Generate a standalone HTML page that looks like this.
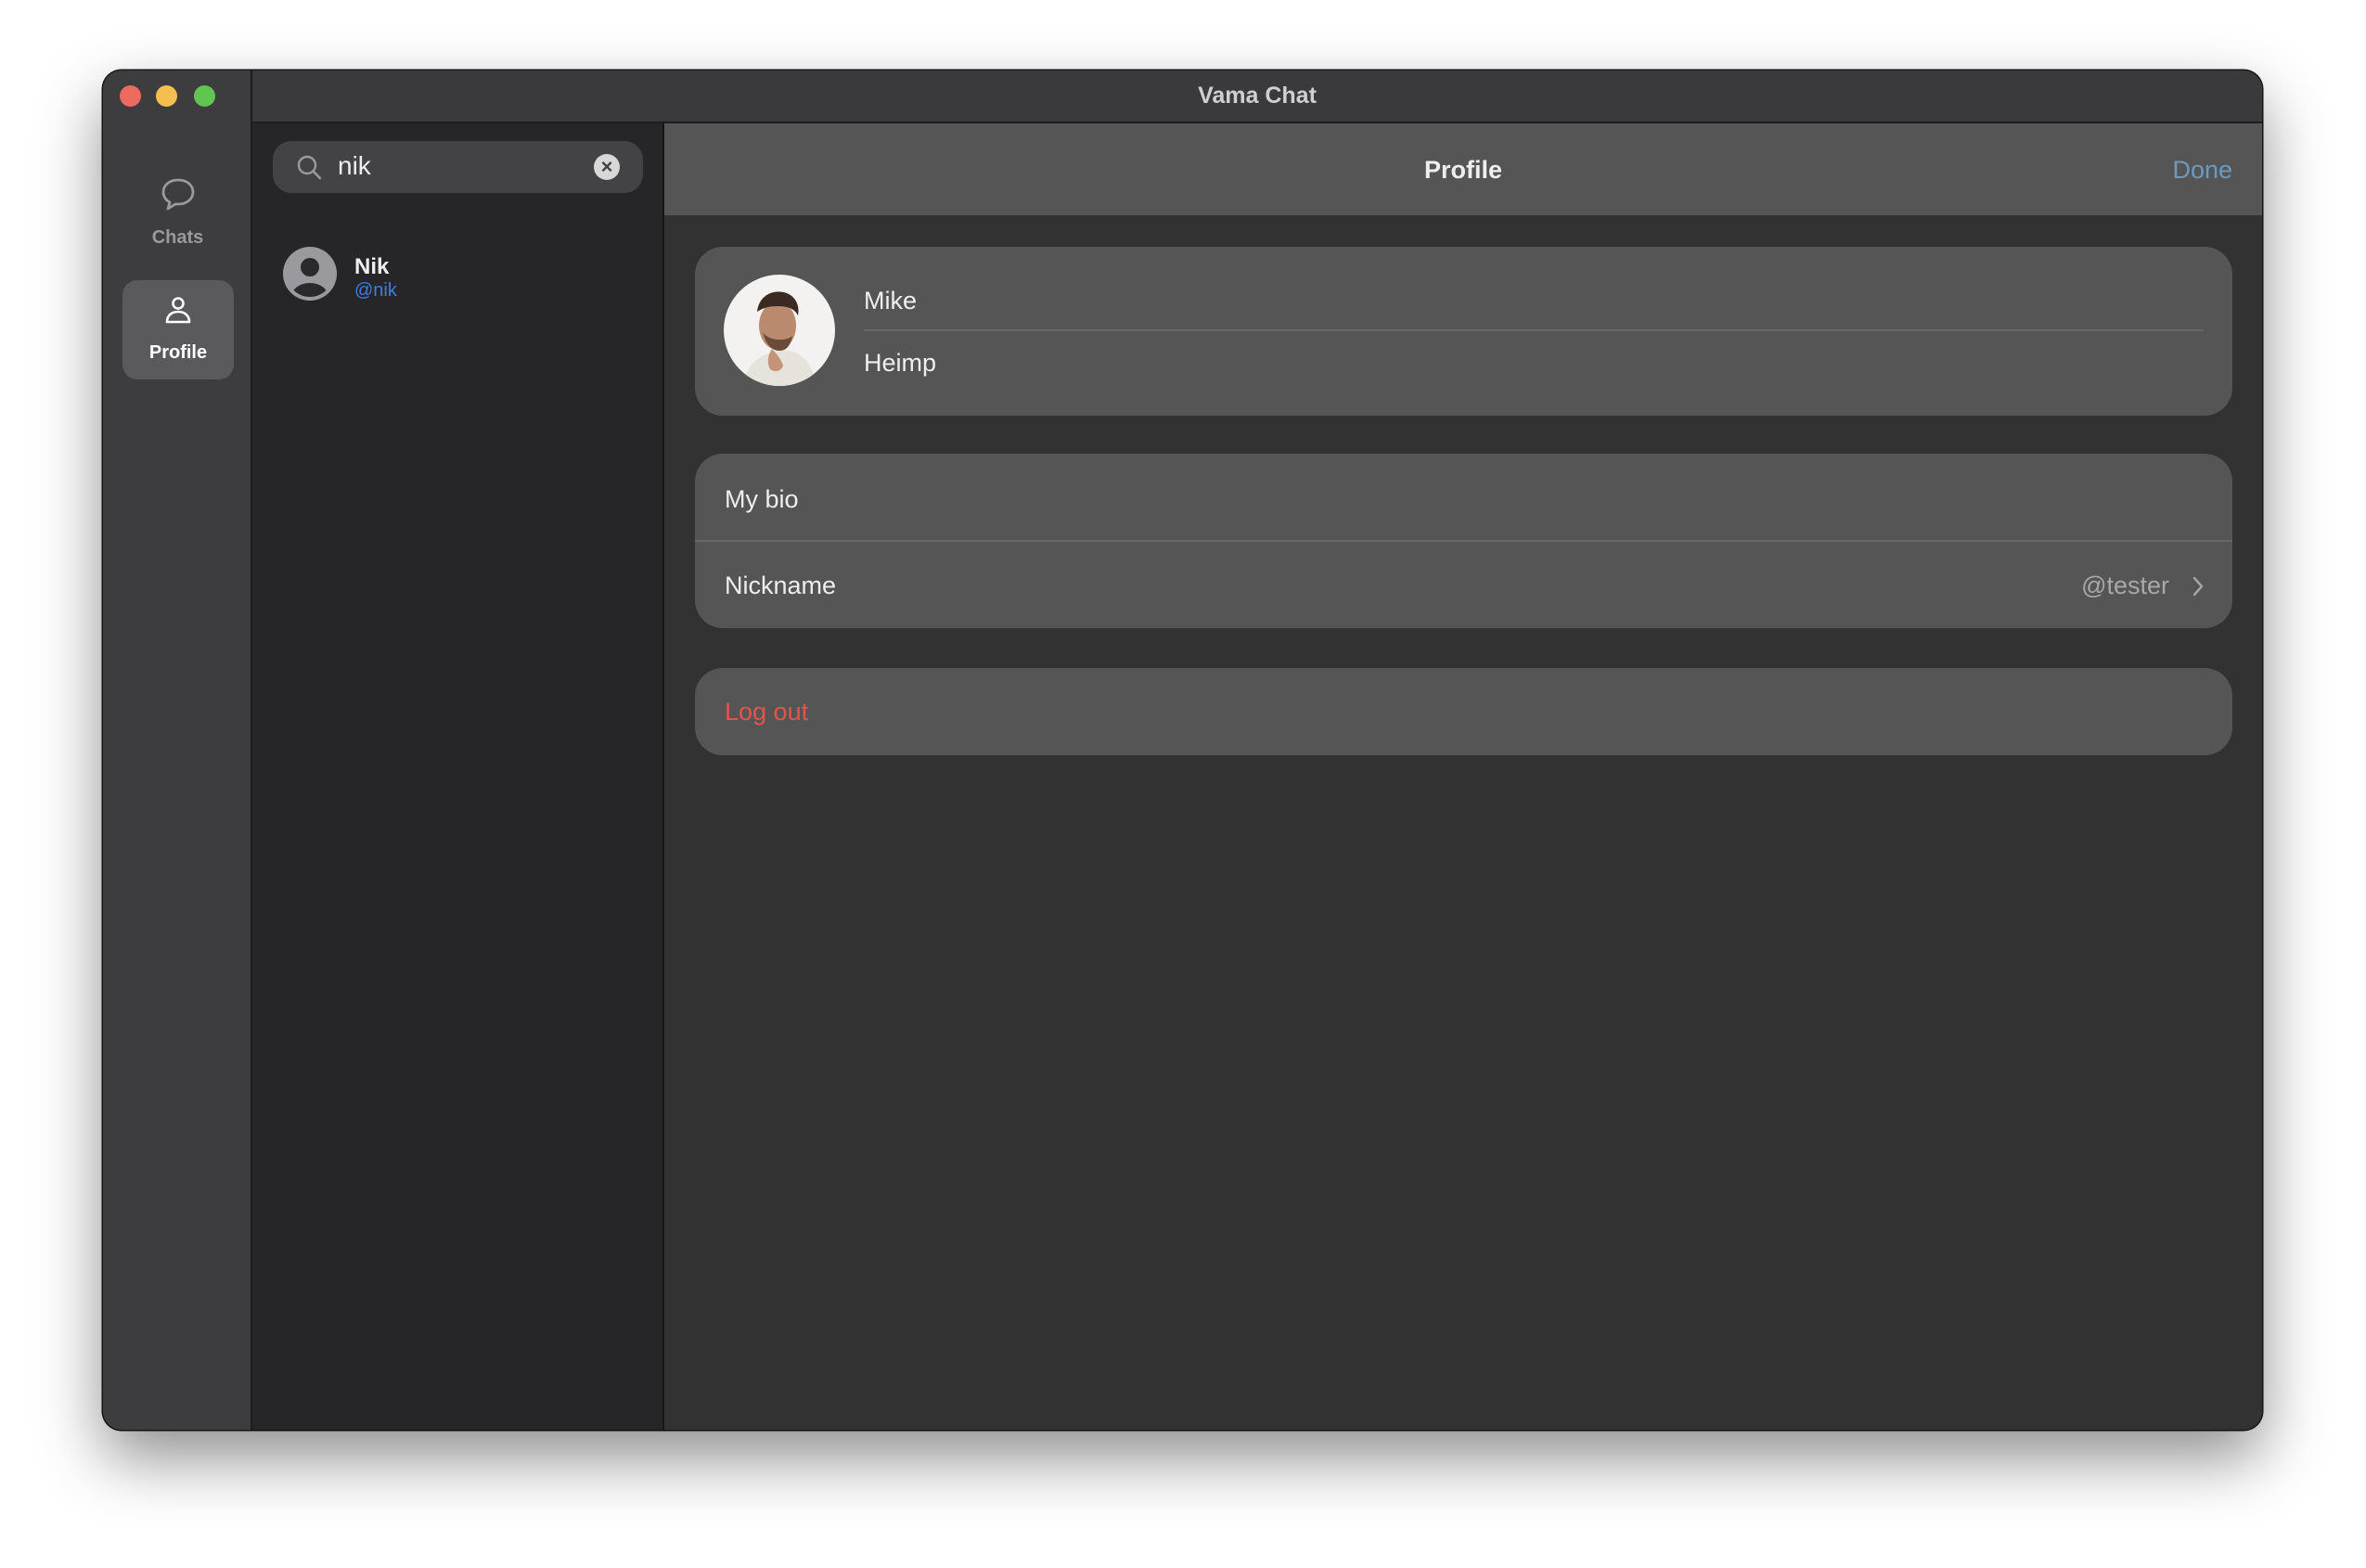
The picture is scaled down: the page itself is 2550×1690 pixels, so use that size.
<!DOCTYPE html>
<html><head><meta charset="utf-8"><style>
*{margin:0;padding:0;box-sizing:border-box}
body{width:2550px;height:1690px;background:#fff;position:relative;overflow:hidden;font-family:"Liberation Sans",sans-serif}
.win{position:absolute;left:111px;top:76px;width:2327px;height:1465px;border-radius:20px;background:#323232;overflow:hidden;box-shadow:0 30px 70px rgba(0,0,0,.45),0 0 0 1.5px #1a1a1a}
.title{position:absolute;left:161px;top:0;right:0;height:57px;background:#3a3a3c;border-bottom:2px solid #1c1c1c}
.title span{position:absolute;left:0;right:0;top:13px;text-align:center;color:#cfcfcf;font-weight:bold;font-size:25px}
.side{position:absolute;left:0;top:0;width:161px;height:100%;background:#3d3d3f;border-right:2px solid #1c1c1c}
.tl{position:absolute;top:16px;width:23px;height:23px;border-radius:50%}
.list{position:absolute;left:161px;top:57px;width:444px;bottom:0;background:#262628;border-right:2px solid #161616}
.right{position:absolute;left:605px;top:57px;right:0;bottom:0;background:#323232}
.hdr{height:99px;background:#555;position:relative}
.card{position:absolute;left:33px;right:32px;background:#555;border-radius:30px}
.t{position:absolute;color:#eee;font-size:27px}
</style></head><body>
<div class="win">
 <div class="side">
  <div class="tl" style="left:18px;background:#ec6a5e"></div>
  <div class="tl" style="left:57px;background:#f4bf4f"></div>
  <div class="tl" style="left:98px;background:#61c554"></div>
  <svg style="position:absolute;left:62px;top:115px" width="38" height="40" viewBox="0 0 38 40"><path d="M19 3C9 3 3 9 3 16c0 5 3 9 7 11l-2 7 8-5c1 0 2 0 3 0 10 0 16-6 16-13S29 3 19 3z" fill="none" stroke="#9a9a9a" stroke-width="2.8" stroke-linejoin="round"/></svg>
  <div style="position:absolute;left:0;width:161px;top:169px;text-align:center;color:#9a9a9a;font-weight:bold;font-size:20px">Chats</div>
  <div style="position:absolute;left:21px;top:226px;width:120px;height:107px;background:#5a5a5c;border-radius:16px">
   <svg style="position:absolute;left:44px;top:17px" width="32" height="32" viewBox="0 0 32 32"><circle cx="16" cy="8" r="5.5" fill="none" stroke="#fff" stroke-width="2.6"/><path d="M4 28c0-7 5-11 12-11s12 4 12 11z" fill="none" stroke="#fff" stroke-width="2.6" stroke-linejoin="round"/></svg>
   <div style="position:absolute;left:0;right:0;top:67px;text-align:center;color:#fff;font-weight:bold;font-size:20px">Profile</div>
  </div>
 </div>
 <div class="title"><span>Vama Chat</span></div>
 <div class="list">
  <div style="position:absolute;left:22px;top:19px;width:399px;height:56px;background:#434345;border-radius:20px">
   <svg style="position:absolute;left:25px;top:14px" width="30" height="30" viewBox="0 0 30 30"><circle cx="12" cy="12" r="9" fill="none" stroke="#9a9a9a" stroke-width="2.4"/><path d="M18.5 18.5L26 26" stroke="#9a9a9a" stroke-width="2.6" stroke-linecap="round"/></svg>
   <div style="position:absolute;left:70px;top:11px;color:#eee;font-size:28px">nik</div>
   <div style="position:absolute;left:346px;top:14px;width:28px;height:28px;border-radius:50%;background:#d8d8d8;color:#444;font-size:22px;font-weight:bold;line-height:28px;text-align:center">×</div>
  </div>
  <svg style="position:absolute;left:32px;top:132px" width="60" height="60" viewBox="0 0 60 60"><circle cx="30" cy="30" r="29" fill="#9a9a9e"/><clipPath id="c"><circle cx="30" cy="30" r="25"/></clipPath><g clip-path="url(#c)" fill="#2a2a2c"><circle cx="30" cy="23" r="10"/><ellipse cx="30" cy="55" rx="20" ry="15"/></g></svg>
  <div style="position:absolute;left:110px;top:141px;color:#eee;font-weight:bold;font-size:24px">Nik</div>
  <div style="position:absolute;left:110px;top:169px;color:#3f7de0;font-size:20px">@nik</div>
 </div>
 <div class="right">
  <div class="hdr">
   <div style="position:absolute;left:0;right:0;top:35px;text-align:center;color:#eee;font-weight:bold;font-size:27px">Profile</div>
   <div style="position:absolute;right:32px;top:35px;color:#6a9bc0;font-size:27px">Done</div>
  </div>
  <div class="card" style="top:133px;height:182px">
   <svg style="position:absolute;left:31px;top:30px" width="120" height="120" viewBox="0 0 120 120"><clipPath id="a"><circle cx="60" cy="60" r="60"/></clipPath><g clip-path="url(#a)"><rect width="120" height="120" fill="#f4f2f0"/><path d="M20 120c5-25 20-35 40-38s35 10 40 38z" fill="#e6e2dc"/><ellipse cx="58" cy="55" rx="20" ry="26" fill="#b98a6e"/><path d="M36 40c2-18 18-25 32-20 10 4 14 14 12 24-4-8-12-10-22-10-10 0-16 2-22 6z" fill="#3a2a22"/><path d="M42 62c4 14 10 20 18 20s12-6 14-16c-6 6-26 6-32-4z" fill="#6b4a3a"/><path d="M52 80c-4 6-6 14-2 22 6 4 12 2 14-4-2-6-6-12-12-18z" fill="#c49478"/></g></svg>
   <div class="t" style="left:182px;top:43px">Mike</div>
   <div style="position:absolute;left:182px;right:31px;top:89px;height:2px;background:#686868"></div>
   <div class="t" style="left:182px;top:110px">Heimp</div>
  </div>
  <div class="card" style="top:356px;height:188px">
   <div class="t" style="left:32px;top:34px">My bio</div>
   <div style="position:absolute;left:0;right:0;top:93px;height:2px;background:#686868"></div>
   <div class="t" style="left:32px;top:127px">Nickname</div>
   <div style="position:absolute;right:68px;top:127px;color:#a8a8a8;font-size:27px">@tester</div>
   <svg style="position:absolute;right:30px;top:130px" width="14" height="26" viewBox="0 0 14 26"><path d="M3 4l8 9-8 9" fill="none" stroke="#a8a8a8" stroke-width="2.4" stroke-linecap="round" stroke-linejoin="round"/></svg>
  </div>
  <div class="card" style="top:587px;height:94px">
   <div class="t" style="left:32px;top:32px;color:#e5534b">Log out</div>
  </div>
 </div>
</div>
</body></html>
